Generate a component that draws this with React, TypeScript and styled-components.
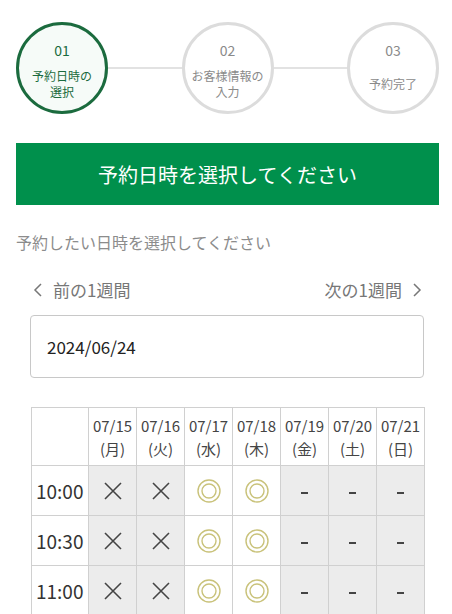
import { createGlobalStyle, styled } from "styled-components";

const GlobalStyle = createGlobalStyle`
  body {
    margin: 0;
    background: #fff;
    font-family: "Noto Sans CJK JP", "Noto Sans", sans-serif;
  }
`;

const Page = styled.div`
  width: 452px;
  padding: 22px 13px 0 16px;
  box-sizing: border-box;
`;

const Steps = styled.div`
  display: flex;
  align-items: center;
`;

const StepCircle = styled.div<{ $active?: boolean }>`
  width: 92px;
  height: 92px;
  box-sizing: border-box;
  border-radius: 50%;
  border: 3px solid ${(p) => (p.$active ? "#1b6b3e" : "#dcdcdc")};
  background: ${(p) => (p.$active ? "#f6fbf8" : "#fff")};
  color: ${(p) => (p.$active ? "#1b6b3e" : "#8a8a8a")};
  display: flex;
  flex-direction: column;
  align-items: center;
  justify-content: center;
  flex-shrink: 0;
  text-align: center;
  padding-top: 4px;
`;

const StepNum = styled.div`
  font-size: 14px;
  line-height: 18px;
  margin-bottom: 9px;
`;

const StepLabel = styled.div`
  font-size: 12px;
  line-height: 16px;
  min-height: 32px;
  display: flex;
  align-items: center;
  justify-content: center;
`;

const StepLine = styled.div`
  flex: 1;
  height: 2px;
  background: #e2e2e2;
`;

const Banner = styled.div`
  margin-top: 29px;
  height: 62px;
  background: #00904c;
  color: #fff;
  font-size: 20px;
  display: flex;
  align-items: center;
  justify-content: center;
`;

const Lead = styled.p`
  margin: 25px 0 0;
  font-size: 16px;
  line-height: 24px;
  color: #8c8c8c;
`;

const WeekNav = styled.div`
  margin: 24px 17px 0 17px;
  display: flex;
  justify-content: space-between;
  font-size: 17px;
  line-height: 24px;
  color: #777;
`;

const NavLink = styled.span`
  display: flex;
  align-items: center;
  gap: 11px;
  cursor: pointer;
`;

const DateInput = styled.input`
  display: block;
  margin: 13px 0 0 14px;
  width: 394px;
  height: 63px;
  box-sizing: border-box;
  border: 1px solid #c8c8c8;
  border-radius: 4px;
  padding: 0 16px;
  font-size: 17px;
  color: #222;
  font-family: "Noto Sans CJK JP", "Noto Sans", sans-serif;
  &:focus {
    outline: none;
  }
`;

const Table = styled.table`
  margin: 29px 0 0 15px;
  width: 394px;
  border-collapse: collapse;
  table-layout: fixed;
`;

const HeadCell = styled.th`
  border: 1px solid #d0d0d0;
  height: 57px;
  padding: 0;
  font-weight: normal;
  font-size: 15px;
  line-height: 23px;
  color: #444;
  background: #fff;
`;

const TimeCell = styled.td`
  border: 1px solid #d0d0d0;
  height: 49px;
  padding: 0 0 0 4px;
  font-size: 19px;
  font-weight: 400;
  color: #333;
  text-align: left;
`;

const SlotCell = styled.td<{ $open?: boolean; $selected?: boolean }>`
  border: 1px solid #d0d0d0;
  border-top: ${(p) => (p.$selected ? "2px solid #2e8f7a" : "1px solid #d0d0d0")};
  height: 49px;
  padding: 0;
  text-align: center;
  background: ${(p) => (p.$open ? "#fff" : "#ececec")};
`;

const Dash = styled.span`
  display: inline-block;
  width: 7px;
  height: 2px;
  background: #444;
  vertical-align: middle;
`;

const Chevron = ({ dir }: { dir: "left" | "right" }) => (
  <svg width="9" height="14" viewBox="0 0 9 14">
    <polyline
      points={dir === "left" ? "8,1 2,7 8,13" : "1,1 7,7 1,13"}
      fill="none"
      stroke="#777"
      strokeWidth="1.5"
    />
  </svg>
);

const Cross = () => (
  <svg width="20" height="20" viewBox="0 0 20 20" style={{ display: "block", margin: "0 auto" }}>
    <path d="M2 2 L18 18 M18 2 L2 18" stroke="#444" strokeWidth="1.6" />
  </svg>
);

const DoubleCircle = () => (
  <svg width="24" height="24" viewBox="0 0 24 24" style={{ display: "block", margin: "0 auto" }}>
    <circle cx="12" cy="12" r="11" fill="none" stroke="#c9c27a" strokeWidth="1.4" />
    <circle cx="12" cy="12" r="7" fill="none" stroke="#c9c27a" strokeWidth="1.4" />
  </svg>
);

const days = [
  ["07/15", "月"],
  ["07/16", "火"],
  ["07/17", "水"],
  ["07/18", "木"],
  ["07/19", "金"],
  ["07/20", "土"],
  ["07/21", "日"],
];

// 0: ×, 1: ◎, 2: -
const slots = [0, 0, 1, 1, 2, 2, 2];
const times = ["10:00", "10:30", "11:00", "11:30"];

export default function App() {
  return (
    <Page>
      <GlobalStyle />
      <Steps>
        <StepCircle $active>
          <StepNum>01</StepNum>
          <StepLabel>
            予約日時の
            <br />
            選択
          </StepLabel>
        </StepCircle>
        <StepLine />
        <StepCircle>
          <StepNum>02</StepNum>
          <StepLabel>
            お客様情報の
            <br />
            入力
          </StepLabel>
        </StepCircle>
        <StepLine />
        <StepCircle>
          <StepNum>03</StepNum>
          <StepLabel>予約完了</StepLabel>
        </StepCircle>
      </Steps>

      <Banner>予約日時を選択してください</Banner>

      <Lead>予約したい日時を選択してください</Lead>

      <WeekNav>
        <NavLink>
          <Chevron dir="left" />
          前の1週間
        </NavLink>
        <NavLink>
          次の1週間
          <Chevron dir="right" />
        </NavLink>
      </WeekNav>

      <DateInput type="text" defaultValue="2024/06/24" />

      <Table>
        <colgroup>
          <col style={{ width: 57 }} />
          {days.map((d) => (
            <col key={d[0]} />
          ))}
        </colgroup>
        <thead>
          <tr>
            <HeadCell />
            {days.map(([date, wd]) => (
              <HeadCell key={date}>
                {date}
                <br />({wd})
              </HeadCell>
            ))}
          </tr>
        </thead>
        <tbody>
          {times.map((t, r) => (
            <tr key={t}>
              <TimeCell>{t}</TimeCell>
              {slots.map((s, i) => (
                <SlotCell key={i} $open={s === 1} $selected={r === 3 && i === 2}>
                  {s === 0 ? <Cross /> : s === 1 ? <DoubleCircle /> : <Dash />}
                </SlotCell>
              ))}
            </tr>
          ))}
        </tbody>
      </Table>
    </Page>
  );
}
